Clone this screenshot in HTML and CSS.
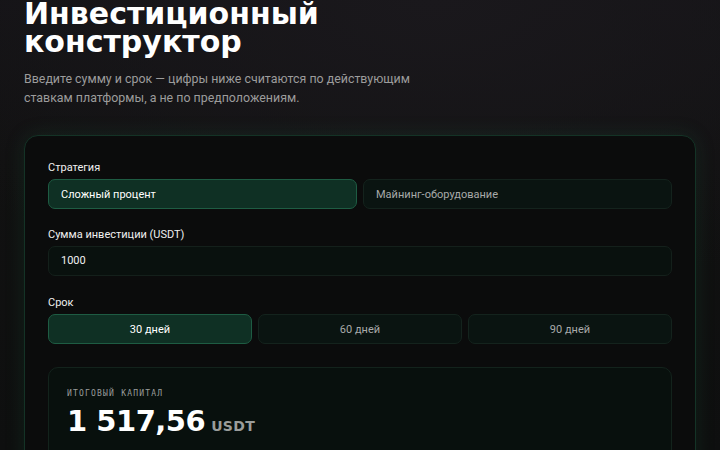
FILE: index.html
```html
<!DOCTYPE html>
<html lang="ru">
<head>
<meta charset="utf-8">
<link rel="stylesheet" href="styles.css">
</head>
<body>
<main class="page">
  <h1 class="title">Инвестиционный<br>конструктор</h1>
  <p class="lead">Введите сумму и срок — цифры ниже считаются по действующим<br>ставкам платформы, а не по предположениям.</p>
  <section class="card">
    <div class="field">
      <div class="label">Стратегия</div>
      <div class="row two">
        <button class="opt active left">Сложный процент</button>
        <button class="opt left">Майнинг-оборудование</button>
      </div>
    </div>
    <div class="field">
      <div class="label">Сумма инвестиции (USDT)</div>
      <div class="input">1000</div>
    </div>
    <div class="field">
      <div class="label">Срок</div>
      <div class="row three">
        <button class="opt active">30 дней</button>
        <button class="opt">60 дней</button>
        <button class="opt">90 дней</button>
      </div>
    </div>
    <div class="result">
      <div class="result-label">ИТОГОВЫЙ КАПИТАЛ</div>
      <div class="result-value">1 517,56<span class="unit">USDT</span></div>
    </div>
  </section>
</main>
</body>
</html>
```

FILE: styles.css
```css
* { box-sizing: border-box; }
html, body { margin: 0; height: 100%; }
body {
  background: radial-gradient(ellipse 600px 300px at 60% 0%, #1a181c 0%, rgba(20,19,22,0) 100%), linear-gradient(180deg, #141316 0%, #111111 35%, #0e0f0f 100%);
  font-family: Roboto, "Noto Sans", sans-serif;
  color: #fff;
  overflow: hidden;
}
.page {
  padding: 0 24px;
}
.title {
  margin: 0;
  font-family: "DejaVu Sans", sans-serif;
  font-weight: 700;
  font-size: 30px;
  line-height: 28px;
  letter-spacing: 0;
  color: #fff;
}
.lead {
  margin: 13px 0 0;
  font-size: 12.4px;
  line-height: 19px;
  color: #9c9c9c;
}
.card {
  margin-top: 28px;
  border: 1px solid #143326;
  border-radius: 14px;
  background: #0b0c0c;
  box-shadow: 0 0 20px rgba(30, 110, 70, 0.2);
  padding: 25px 23px 0;
  height: 340px;
}
.field { margin-bottom: 19px; }
.field:nth-child(2) { margin-bottom: 20px; }
.label {
  font-size: 11px;
  line-height: 14px;
  color: #f0f0f0;
  margin-bottom: 4px;
}
.row { display: grid; gap: 6px; }
.row.two { grid-template-columns: 1fr 1fr; }
.row.three { grid-template-columns: 1fr 1fr 1fr; }
.opt {
  height: 30px;
  border-radius: 7px;
  border: 1px solid #14231d;
  background: #0a1411;
  color: #a8aaa9;
  font-family: Roboto, sans-serif;
  font-size: 11px;
  text-align: center;
  padding: 0 12px;
}
.opt.left { text-align: left; }
.opt.active {
  background: #0f3024;
  border-color: #1e5c43;
  color: #fff;
}
.input {
  height: 30px;
  border-radius: 7px;
  border: 1px solid #14201b;
  background: #09110e;
  font-size: 11px;
  line-height: 28px;
  padding: 0 12px;
  color: #f0f0f0;
}
.result {
  margin-top: 23px;
  border: 1px solid #13231c;
  border-radius: 10px;
  background: #08100d;
  padding: 21px 18px;
  height: 100px;
}
.result-label {
  font-family: "DejaVu Sans Mono", monospace;
  font-size: 8px;
  letter-spacing: 1.2px;
  color: #9a9d9b;
  line-height: 10px;
}
.result-value {
  margin-top: 5px;
  font-family: "DejaVu Sans", sans-serif;
  font-weight: 700;
  font-size: 29px;
  line-height: 34px;
  letter-spacing: -0.5px;
  color: #fff;
}
.unit {
  margin-left: 6px;
  font-size: 14px;
  color: #9a9d9b;
  letter-spacing: 0.3px;
}
```
